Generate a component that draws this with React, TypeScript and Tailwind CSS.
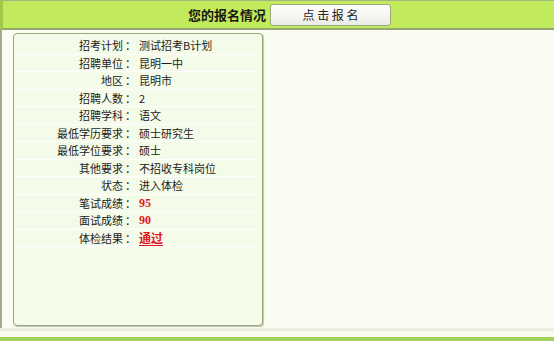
const rows: { label: string; value: string; kind?: 'score' | 'link' }[] = [
  { label: '招考计划', value: '测试招考B计划' },
  { label: '招聘单位', value: '昆明一中' },
  { label: '地区', value: '昆明市' },
  { label: '招聘人数', value: '2' },
  { label: '招聘学科', value: '语文' },
  { label: '最低学历要求', value: '硕士研究生' },
  { label: '最低学位要求', value: '硕士' },
  { label: '其他要求', value: '不招收专科岗位' },
  { label: '状态', value: '进入体检' },
  { label: '笔试成绩', value: '95', kind: 'score' },
  { label: '面试成绩', value: '90', kind: 'score' },
  { label: '体检结果', value: '通过', kind: 'link' },
]

const font = { fontFamily: '"Noto Sans CJK SC", "Liberation Sans", sans-serif' }

const App = () => {
  return (
    <div
      className="w-[554px] h-[341px] bg-[#fbfcf1] text-[11px] text-[#1c1c1c] overflow-hidden"
      style={font}
    >
      <div className="h-[30px] flex items-center bg-[#c2ea5d] border-t border-t-[#a2b385] border-b-2 border-b-[#95a672] border-l-[3px] border-l-[#9fca47] pl-[185px]">
        <span className="font-bold text-[13px] text-[#1a1a10]">您的报名情况</span>
        <button className="ml-[4px] w-[121px] h-[22px] rounded-[3px] border border-[#9aa882] bg-gradient-to-b from-white to-[#ecece6] text-[12px] text-[#222] leading-none">
          点 击 报 名
        </button>
      </div>

      <div className="h-[298px] border-l-2 border-l-[#a2ad90] pt-[3px] pl-[11px]">
        <div className="w-[250px] h-[293px] rounded-[4px] border-[1.5px] border-[#97a878] bg-[#f5fbe9] shadow-[1px_1px_1px_rgba(80,90,60,0.35)] px-[2px] pt-[3px]">
          {rows.map((r) => (
            <div
              key={r.label}
              className="flex h-[17.5px] items-center border-b border-b-white"
            >
              <div className="w-[107px] text-right whitespace-nowrap">{r.label}</div>
              <div className="w-[12px] pl-[2px] whitespace-nowrap">：</div>
              <div className="pl-[4px] whitespace-nowrap">
                {r.kind === 'score' ? (
                  <span
                    className="font-bold text-[12px] text-[#e0141b]"
                    style={{ fontFamily: '"Liberation Serif", serif' }}
                  >
                    {r.value}
                  </span>
                ) : r.kind === 'link' ? (
                  <span className="font-bold text-[12px] text-[#e0141b] underline underline-offset-2">
                    {r.value}
                  </span>
                ) : (
                  r.value
                )}
              </div>
            </div>
          ))}
        </div>
      </div>

      <div className="h-[3px] bg-[#ecede0]" />
      <div className="h-[6px]" />
      <div className="h-[4px] bg-[#a3d25c]" />
    </div>
  )
}

export default App
